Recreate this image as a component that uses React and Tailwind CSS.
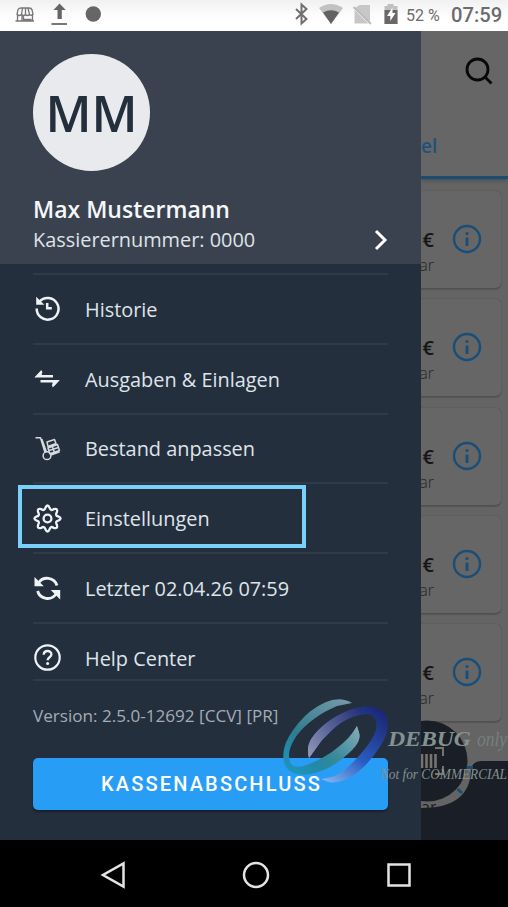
import React from 'react';

const line = 'border-t-2 border-[#2f3b49]';

function MenuRow({ icon, label, last }) {
  return (
    <li className={(last ? 'h-[57px] ' : 'h-[69.800px] ') + 'flex items-start ' + line}>
      <div className="flex h-[69px] w-full shrink-0 items-center">
        <span className="flex w-[52px] shrink-0 items-center">{icon}</span>
        <span className="whitespace-nowrap pt-[0.500px] text-[19.900px] leading-none text-[#dfe4ea]">{label}</span>
      </div>
    </li>
  );
}

const HistoryIcon = () => (
  <svg width="30" height="30" viewBox="0 1 30 30" fill="none" stroke="#eef2f5" strokeWidth="2.500">
    <path d="M6.500 7.500A10.900 10.900 0 1 1 3.700 14.500" />
    <path d="M3.200 2.700v8.100h8.100z" fill="#eef2f5" stroke="none" />
    <path d="M14.200 9v5.300h4.600" />
  </svg>
);
const SwapIcon = () => (
  <svg width="30" height="30" viewBox="0 0 30 30" fill="none" stroke="#eef2f5" strokeWidth="2.400">
    <path d="M20 12.200H4.200L8.800 7.400M7.500 17.200H24L19.600 22" />
    <path d="M2 13.200L8.800 6v6zM26.500 16.200l-7 7.300v-6z" fill="#eef2f5" stroke="none" />
  </svg>
);
const CartIcon = () => (
  <svg width="30" height="30" viewBox="0 0 30 30" fill="none" stroke="#d5dae0" strokeWidth="1.500" strokeLinejoin="round">
    <path d="M2.500 3.700h5l4.500 14.800M8.800 5l4.700 13M14 8l7.500-2.500 1.500 4-8 3zM15 14l9.500-3.500 2 6-9.700 3.200zM16 16.500l9.500-3M18 21l8.700-3.200M19.500 13l1.800 5" />
    <circle cx="14" cy="21.700" r="3.900" />
  </svg>
);
const GearIcon = () => (
  <svg width="30" height="30" viewBox="0 0 30 30" fill="none" stroke="#eef2f5" strokeWidth="2.300" strokeLinejoin="round">
    <path d="M12.400 3.800Q14.500-.8 16.600 3.800C17.300 6.300 18.700 6.500 20.600 5.200Q25.200 3.800 23.800 8.400C22.600 10.500 23 12 25.200 12.400Q30 14.500 25.200 16.600C23 17 22.600 18.500 23.800 20.600Q25.200 25.200 20.600 23.800C18.700 22.500 17.300 22.700 16.600 25.200Q14.500 29.800 12.400 25.200C11.700 22.700 10.300 22.500 8.400 23.800Q3.800 25.200 5.200 20.600C6.400 18.500 6 17 3.800 16.600Q-1 14.500 3.800 12.400C6 12 6.400 10.500 5.200 8.400Q3.800 3.800 8.400 5.200C10.300 6.500 11.700 6.300 12.400 3.800Z" />
    <circle cx="14.500" cy="14.500" r="3.900" />
  </svg>
);
const SyncIcon = () => (
  <svg width="30" height="30" viewBox="0 0 30 30" fill="none" stroke="#eef2f5" strokeWidth="2.800">
    <path d="M5.500 9A10.300 10.300 0 0 1 24 11.500M4.600 17A10.300 10.300 0 0 0 23 20" />
    <path d="M1.500 3v9.300h9.300zM27.200 25.500v-9.500h-9.500z" fill="#eef2f5" stroke="none" />
  </svg>
);
const HelpIcon = () => (
  <svg width="30" height="30" viewBox="0 0 30 30" fill="none" stroke="#eef2f5" strokeWidth="2.200">
    <circle cx="14.500" cy="14.500" r="12.200" />
    <path d="M10.700 11.800c.2-5 7.800-5 7.700-.3 0 2.700-3.800 2.800-3.800 5.700" strokeWidth="2.300" />
    <circle cx="14.600" cy="20.500" r="1.500" fill="#eef2f5" stroke="none" />
  </svg>
);

const items = [
  [<HistoryIcon />, 'Historie'],
  [<SwapIcon />, 'Ausgaben & Einlagen'],
  [<CartIcon />, 'Bestand anpassen'],
  [<GearIcon />, 'Einstellungen'],
  [<SyncIcon />, 'Letzter 02.04.26 07:59'],
  [<HelpIcon />, 'Help Center'],
];

function StatusBar() {
  return (
    <header className="flex h-[31px] shrink-0 items-center bg-gradient-to-b from-[#f1f1f1] to-white to-60% text-[#6c6c6c]">
      <svg width="110" height="31" viewBox="0 0 110 31" className="shrink-0" fill="none" stroke="#777">
        <path d="M18 9.500q1-1.500 3-1.500h8q2.500 0 3 2M18 9.500l-1 5q2 2 4.500 0 2 2 4 0 2 2 4 0 2 1.500 3.500 0l-1-5M21.500 14.500l1-6M25.500 14.500v-6M29.500 14.500l-1.500-6M17.500 15v5.500M22 15v5.500M23.500 16v3.500h8M32.500 14v7M15.500 21h18.500" strokeWidth="1.300" />
        <path d="M59.500 3.500l-6 6.500h4v9h4.300v-9h4z" fill="#666" stroke="none" />
        <path d="M51.500 24h15.500" strokeWidth="2" />
        <circle cx="93.300" cy="14" r="7.700" fill="#666" stroke="none" />
      </svg>
      <svg width="114" height="31" viewBox="290 0 114 31" className="ml-[180px] shrink-0" fill="none">
        <path d="M296 9l10.500 10-5 4.500v-19l5 4.500-10.500 10" stroke="#707070" strokeWidth="2" />
        <path d="M319 8q12-8 24 0l-12 16z" fill="#c2c2c2" />
        <path d="M323 12.500q8-4.500 16 0l-8 11.500z" fill="#626262" />
        <path d="M359.500 5h10.500v18l-15-15zM354.500 10v13.500h14z" fill="#c7c7c7" />
        <path d="M353.500 7l17.500 17" stroke="#bbb" strokeWidth="1.800" />
        <path d="M384.500 6h3v-2h6v2h4v18h-13z" fill="#c0c0c0" />
        <path d="M384.500 10h13v14h-13z" fill="#686868" />
        <path d="M392.500 7.500l-5.500 8.500h3.300v5l5.200-8h-3z" fill="#fff" />
      </svg>
      <span className="ml-[2px] w-[45px] whitespace-nowrap font-['Roboto'] text-[16px] leading-none">52 %</span>
      <span className="font-['Roboto'] text-[20.200px] font-medium leading-none">07:59</span>
    </header>
  );
}

function Card() {
  return (
    <div className="flex h-[99px] w-[81px] shrink-0 rounded-r-[7px] border border-l-0 border-[#5e5e5e] border-b-[#505050] bg-[#666] shadow-[0_1px_1px_#555]">
      <div className="flex w-[13px] flex-col items-end pt-[39px]">
        <span className="text-[20px] font-semibold leading-[20px] text-[#151515]">€</span>
        <span className="mt-[5px] text-[16px] font-light leading-[20px] text-[#252525]">ar</span>
      </div>
      <svg className="ml-[18px] mt-[33px]" width="30" height="30" viewBox="0 0 30 30" fill="none" stroke="#194e79">
        <circle cx="15" cy="15" r="13" strokeWidth="2.400" />
        <path d="M15 13.500v8.500" strokeWidth="2.900" />
        <circle cx="15" cy="9.500" r="1.600" fill="#194e79" stroke="none" />
      </svg>
    </div>
  );
}

function ArticlePane() {
  return (
    <section className="relative flex w-[87px] shrink-0 flex-col overflow-hidden bg-[#646464]">
      <div className="flex h-[148px] shrink-0 flex-col border-b-[3px] border-[#1d4c73] bg-[#666] shadow-[0_2px_3px_#505050]">
        <svg className="ml-[43px] mt-[25px] shrink-0" width="32" height="32" viewBox="0 0 32 32" fill="none" stroke="#080808" strokeWidth="2.800">
          <circle cx="13.500" cy="13.500" r="10.500" />
          <path d="M21 21l6.500 6.500" />
        </svg>
        <span className="mt-[47px] text-[19px] font-semibold leading-[22px] text-[#1e527c]">el</span>
      </div>
      <div className="mt-[11px] flex flex-col gap-[9.300px]">
        <Card /><Card /><Card /><Card /><Card />
      </div>
      <svg className="absolute bottom-0 left-0" width="87" height="130" viewBox="421 710 87 130" fill="none">
        <path d="M421 808Q470 808 471 770Q472 761 482 761H508V840H421Z" fill="#1a1e26" />
        <circle cx="427" cy="761" r="40.500" fill="#1a1e26" />
        <path d="M457.500 789l4.500 4M466.500 767.500h6.500" stroke="#174c74" strokeWidth="2.800" />
        <path d="M422 754v14M426.500 754v14M431 754v14M435.500 754v14" stroke="#77736e" strokeWidth="2.600" />
        <path d="M435 748h8v8M443 766v8h-8" stroke="#77736e" strokeWidth="2" />
      </svg>
      <span className="absolute bottom-[31px] left-0 h-[6px] overflow-hidden text-[16px] leading-[8px] text-[#1c1c1c]">ar</span>
    </section>
  );
}

// Closed outline that rounds through the midpoints of its points; the first point stays a sharp tip.
function smooth(points) {
  let d = 'M' + points[0].join(' ');
  for (let i = 1; i < points.length - 1; i++) {
    const [x, y] = points[i];
    const [nx, ny] = points[i + 1];
    d += ` Q${x} ${y} ${(x + nx) / 2} ${(y + ny) / 2}`;
  }
  return d + ' L' + points[points.length - 1].join(' ') + 'Z';
}

const tealLoop = smooth([
  [352, 703], [340, 696], [310, 709], [287, 737], [282, 757], [287, 771], [303, 776], [327, 770], [350, 753],
  [361, 739], [357, 726], [357, 726], [350, 737], [333, 752], [313, 763], [297, 768], [289, 763], [289, 748],
  [300, 730], [320, 714], [337, 706],
]);
const indigoLoop = smooth([
  [309, 758], [306, 747], [317, 730], [337, 715], [360, 706], [378, 707], [388, 716], [388, 734], [373, 758],
  [353, 777], [333, 784], [321, 779], [321, 779], [337, 776], [353, 763], [370, 743], [378, 727], [373, 714],
  [360, 714], [340, 722], [322, 740],
]);

function Watermark() {
  return (
    <svg className="pointer-events-none absolute left-[278px] top-[690px]" width="230" height="100" viewBox="278 690 230 100">
      <defs>
        <linearGradient id="teal" gradientUnits="userSpaceOnUse" x1="300" y1="776" x2="345" y2="700"><stop stopColor="#1c94bd" /><stop offset=".4" stopColor="#2d7d90" /><stop offset="1" stopColor="#7398a6" /></linearGradient>
        <linearGradient id="indigo" gradientUnits="userSpaceOnUse" x1="325" y1="785" x2="384" y2="712"><stop stopColor="#86bbf2" /><stop offset=".45" stopColor="#2a5cc0" /><stop offset="1" stopColor="#1b2672" /></linearGradient>
        <linearGradient id="lilac" gradientUnits="userSpaceOnUse" x1="308" y1="755" x2="364" y2="708"><stop stopColor="#9298b6" /><stop offset=".5" stopColor="#555f96" /><stop offset="1" stopColor="#1f2b75" /></linearGradient>
        <clipPath id="upper"><path d="M300 700H362V740L310 765H300Z" /></clipPath>
        <linearGradient id="leaf" gradientUnits="userSpaceOnUse" x1="318" y1="768" x2="358" y2="728"><stop stopColor="#2f9aa5" stopOpacity="0" /><stop offset="1" stopColor="#86a7b4" /></linearGradient>
        <clipPath id="leafArea"><path d="M318 785L315 755L358 722H365V745Z" /></clipPath>
      </defs>
      <path d={tealLoop} fill="url(#teal)" />
      <path d={tealLoop} fill="url(#leaf)" clipPath="url(#leafArea)" />
      <path d={indigoLoop} fill="url(#indigo)" />
      <path d={indigoLoop} fill="url(#lilac)" clipPath="url(#upper)" />
      <g fontFamily="Liberation Serif, serif" fontStyle="italic" fill="#849191">
        <text x="388" y="746" fontSize="22" fontWeight="bold" textLength="83" lengthAdjust="spacingAndGlyphs">DEBUG</text>
        <text x="477" y="746" fontSize="20" opacity=".6" textLength="30" lengthAdjust="spacingAndGlyphs">only</text>
        <text x="380" y="779" fontSize="14" textLength="127" lengthAdjust="spacingAndGlyphs">Not for COMMERCIAL</text>
      </g>
    </svg>
  );
}

export default function App() {
  return (
    <div className="relative flex h-[907px] w-[508px] flex-col overflow-hidden bg-black font-['Open_Sans','Noto_Sans',sans-serif]">
      <StatusBar />
      <main className="flex h-[809px] shrink-0">
        <aside className="relative flex w-[421px] shrink-0 flex-col bg-[#242f3d]">
          <div className="h-[233px] shrink-0 bg-[#3a424f] pl-[33px] pr-[33px] pt-[23px]">
            <div className="flex size-[117px] items-center justify-center rounded-full bg-[#e9eaed] text-[50px] font-semibold leading-none text-[#242f3d]">MM</div>
            <div className="mt-[23px] whitespace-nowrap text-[23px] font-semibold leading-[31px] text-[#f5f7fa]">Max Mustermann</div>
            <div className="flex h-[29px] items-center justify-between">
              <span className="text-[19.900px] leading-[28px] text-[#dfe3e8]">Kassierernummer: 0000</span>
              <svg width="14" height="22" viewBox="0 0 14 22" fill="none" stroke="#fff" strokeWidth="3"><path d="M2 2l9 9-9 9" /></svg>
            </div>
          </div>
          <ul className="mx-[33px] mt-[9px]">
            {items.map(([icon, label], i) => <MenuRow key={label} icon={icon} label={label} last={i === 5} />)}
          </ul>
          <div className={'mx-[33px] whitespace-nowrap pt-[24px] text-[17.100px] leading-[22px] text-[#a5acb5] ' + line}>Version: 2.5.0-12692 [CCV] [PR]</div>
          <button className="mx-[33px] mt-[31px] h-[52px] rounded-[5px] bg-[#289df5] pl-[2px] font-['Roboto'] text-[20px] font-medium tracking-[2.150px] text-white shadow-[0_2px_2px_#17202c]">KASSENABSCHLUSS</button>
          <div className="absolute left-[18px] top-[454px] h-[63px] w-[288px] border-4 border-[#79d0fa]" />
        </aside>
        <ArticlePane />
      </main>
      <nav className="flex h-[67px] shrink-0 items-center pl-[99px] pt-[2px]">
        <svg width="330" height="32" viewBox="99 859 330 32" fill="none" stroke="#e4e4e4" strokeWidth="2.500">
          <path d="M123.500 863.500v23L103 875z" />
          <circle cx="256" cy="875" r="12" />
          <rect x="388.500" y="864.500" width="21" height="21" />
        </svg>
      </nav>
      <Watermark />
    </div>
  );
}
